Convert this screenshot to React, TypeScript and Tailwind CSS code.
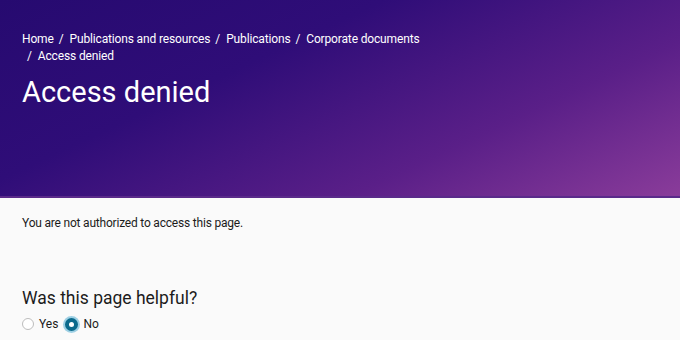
const crumbs = ['Publications and resources', 'Publications', 'Corporate documents', 'Access denied']

export default function App() {
  return (
    <div className="min-h-[340px] w-full bg-[#fafafa] font-['Roboto',sans-serif] text-[#1c1c1c]">
      {/* Hero banner */}
      <header className="h-[198px] border-b-2 border-[#5a2a8a] bg-[linear-gradient(155deg,#260a70_0%,#2f0d78_35%,#5a1f88_70%,#8a3c9a_100%)] px-[22px] pt-[31px] text-white">
        <nav className="max-w-[420px] text-[12px] leading-[17px] tracking-[-0.15px]">
          <a className="hover:underline">Home</a>
          {crumbs.map((c) => (
            <span key={c} className="ml-[5px] inline-block">
              <span className="mr-[6px]">/</span>
              <a className="hover:underline">{c}</a>
            </span>
          ))}
        </nav>
        <h1 className="mt-[7px] text-[29px] leading-[40px] font-normal">Access denied</h1>
      </header>

      <main className="px-[22px]">
        <p className="mt-[16px] text-[12px] leading-[18px] tracking-[-0.2px]">You are not authorized to access this page.</p>

        <section className="mt-[53px]">
          <h2 className="text-[17.5px] leading-[26px]">Was this page helpful?</h2>
          <div className="mt-[4px] flex items-center gap-[7px] text-[12px]">
            <label className="flex items-center gap-[5px]">
              <span className="h-[12px] w-[12px] rounded-full border border-[#bdbdbd] bg-white" />
              <span>Yes</span>
            </label>
            <label className="flex items-center gap-[5px]">
              <span className="flex h-[13px] w-[13px] items-center justify-center rounded-full bg-[#0b6a8c] ring-[2px] ring-[#9ed0e4]">
                <span className="h-[5px] w-[5px] rounded-full bg-white" />
              </span>
              <span>No</span>
            </label>
          </div>
        </section>
      </main>
    </div>
  )
}
